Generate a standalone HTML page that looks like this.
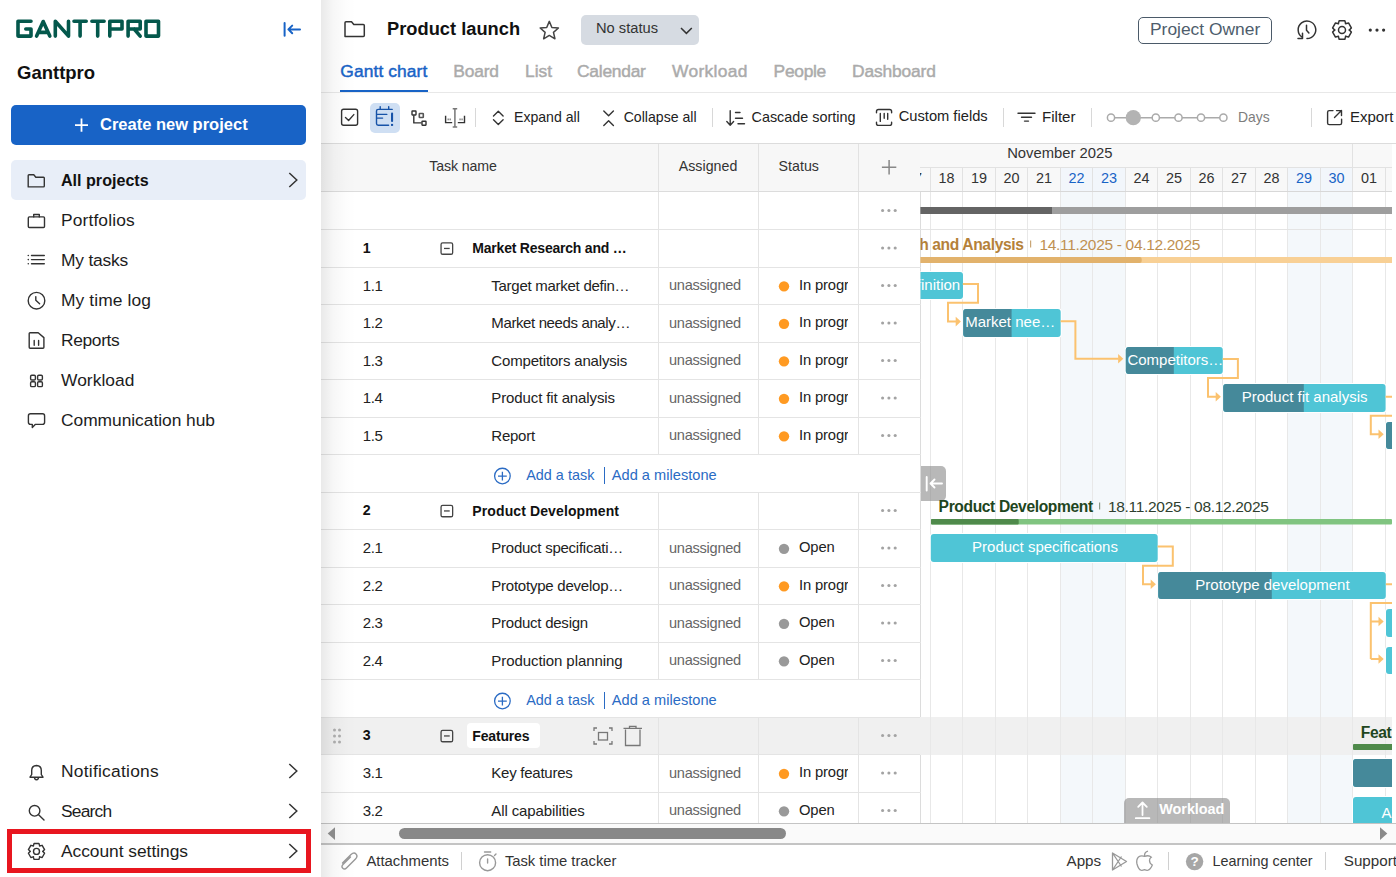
<!DOCTYPE html>
<html><head><meta charset="utf-8"><title>Ganttpro</title>
<style>
html,body{margin:0;padding:0;}
body{width:1396px;height:877px;position:relative;overflow:hidden;background:#fff;font-family:"Liberation Sans",sans-serif;}
.r{position:absolute;}
.t{position:absolute;line-height:1;white-space:nowrap;}
svg.ov{position:absolute;left:0;top:0;z-index:4;}
</style></head><body>
<div class="r" style="left:0.00px;top:0.00px;width:321.00px;height:877.00px;background:#fff;"></div>
<div class="t " style="left:17.00px;top:63.84px;font-size:18.5px;color:#111;font-weight:bold;">Ganttpro</div>
<div class="r" style="left:11.00px;top:105.00px;width:295.00px;height:40.00px;background:#1863c6;border-radius:5px;"></div>
<div class="t " style="left:100.00px;top:115.83px;font-size:16.5px;color:#fff;font-weight:bold;">Create new project</div>
<div class="r" style="left:11.00px;top:160.00px;width:295.00px;height:40.00px;background:#e8eef8;border-radius:5px;"></div>
<div class="t " style="left:61.00px;top:172.27px;font-size:16.1px;color:#111;font-weight:bold;">All projects</div>
<div class="t " style="left:61.00px;top:211.97px;font-size:17.4px;color:#1d1d1d;letter-spacing:0.127px;">Portfolios</div>
<div class="t " style="left:61.00px;top:251.97px;font-size:17.4px;color:#1d1d1d;letter-spacing:-0.205px;">My tasks</div>
<div class="t " style="left:61.00px;top:291.97px;font-size:17.4px;color:#1d1d1d;letter-spacing:0.096px;">My time log</div>
<div class="t " style="left:61.00px;top:331.97px;font-size:17.4px;color:#1d1d1d;letter-spacing:-0.360px;">Reports</div>
<div class="t " style="left:61.00px;top:371.97px;font-size:17.4px;color:#1d1d1d;letter-spacing:0.041px;">Workload</div>
<div class="t " style="left:61.00px;top:411.97px;font-size:17.4px;color:#1d1d1d;letter-spacing:-0.043px;">Communication hub</div>
<div class="t " style="left:61.00px;top:763.07px;font-size:17.4px;color:#1d1d1d;letter-spacing:0.248px;">Notifications</div>
<div class="t " style="left:61.00px;top:803.07px;font-size:17.4px;color:#1d1d1d;letter-spacing:-0.805px;">Search</div>
<div class="t " style="left:61.00px;top:843.07px;font-size:17.4px;color:#1d1d1d;letter-spacing:-0.042px;">Account settings</div>
<div class="r" style="left:7px;top:829px;width:304px;height:44px;box-sizing:border-box;border:5px solid #e8161f;z-index:5"></div>
<div class="t " style="left:387.00px;top:20.31px;font-size:18.3px;color:#111;font-weight:bold;">Product launch</div>
<div class="r" style="left:581.00px;top:15.30px;width:118.00px;height:29.40px;background:#d6dbe2;border-radius:5px;"></div>
<div class="t " style="left:596.00px;top:21.15px;font-size:14.7px;color:#333;">No status</div>
<div class="r" style="left:1138px;top:17px;width:134px;height:27px;box-sizing:border-box;border:1px solid #4b5a69;border-radius:5px;"></div>
<div class="t " style="left:1150.00px;top:20.87px;font-size:17.4px;color:#4e5d6c;">Project Owner</div>
<div class="t " style="left:340.30px;top:63.27px;font-size:17.4px;color:#1863c6;letter-spacing:0.094px;-webkit-text-stroke:0.45px currentColor;">Gantt chart</div>
<div class="t " style="left:453.30px;top:63.27px;font-size:17.4px;color:#ababab;letter-spacing:-0.186px;-webkit-text-stroke:0.45px currentColor;">Board</div>
<div class="t " style="left:525.00px;top:63.27px;font-size:17.4px;color:#ababab;letter-spacing:-0.019px;-webkit-text-stroke:0.45px currentColor;">List</div>
<div class="t " style="left:577.00px;top:63.27px;font-size:17.4px;color:#ababab;letter-spacing:-0.238px;-webkit-text-stroke:0.45px currentColor;">Calendar</div>
<div class="t " style="left:672.00px;top:63.27px;font-size:17.4px;color:#ababab;letter-spacing:0.328px;-webkit-text-stroke:0.45px currentColor;">Workload</div>
<div class="t " style="left:773.60px;top:63.27px;font-size:17.4px;color:#ababab;letter-spacing:-0.296px;-webkit-text-stroke:0.45px currentColor;">People</div>
<div class="t " style="left:852.00px;top:63.27px;font-size:17.4px;color:#ababab;letter-spacing:-0.146px;-webkit-text-stroke:0.45px currentColor;">Dashboard</div>
<div class="r" style="left:321.00px;top:92.00px;width:1075.00px;height:1.00px;background:#e8e8e8;"></div>
<div class="r" style="left:340.00px;top:90.00px;width:88.00px;height:2.20px;background:#1863c6;"></div>
<div class="r" style="left:321.00px;top:143.00px;width:1075.00px;height:1.00px;background:#dcdcdc;"></div>
<div class="r" style="left:370.00px;top:103.00px;width:30.00px;height:29.50px;background:#cfdff3;border-radius:5px;"></div>
<div class="r" style="left:475.30px;top:108.00px;width:1.00px;height:19.00px;background:#d8d8d8;"></div>
<div class="t " style="left:514.00px;top:109.76px;font-size:14.1px;color:#222;">Expand all</div>
<div class="t " style="left:623.70px;top:109.76px;font-size:14.1px;color:#222;">Collapse all</div>
<div class="r" style="left:712.40px;top:108.00px;width:1.00px;height:19.00px;background:#d8d8d8;"></div>
<div class="t " style="left:751.50px;top:109.51px;font-size:14.4px;color:#222;">Cascade sorting</div>
<div class="t " style="left:898.70px;top:109.25px;font-size:14.7px;color:#222;">Custom fields</div>
<div class="r" style="left:1003.20px;top:108.00px;width:1.00px;height:19.00px;background:#d8d8d8;"></div>
<div class="t " style="left:1042.00px;top:108.91px;font-size:15.1px;color:#222;">Filter</div>
<div class="r" style="left:1091.40px;top:108.00px;width:1.00px;height:19.00px;background:#d8d8d8;"></div>
<div class="t " style="left:1238.00px;top:110.63px;font-size:13.9px;color:#7d7d7d;">Days</div>
<div class="r" style="left:1311.20px;top:108.00px;width:1.00px;height:19.00px;background:#d8d8d8;"></div>
<div class="t " style="left:1350.00px;top:109.00px;font-size:15px;color:#222;">Export</div>
<div class="r" style="left:321.00px;top:144.00px;width:599.50px;height:47.00px;background:#f7f7f7;"></div>
<div class="r" style="left:321.00px;top:191.20px;width:599.50px;height:1.00px;background:#dcdcdc;"></div>
<div class="r" style="left:658.00px;top:144.00px;width:1.00px;height:47.00px;background:#e2e2e2;"></div>
<div class="r" style="left:758.00px;top:144.00px;width:1.00px;height:47.00px;background:#e2e2e2;"></div>
<div class="r" style="left:858.00px;top:144.00px;width:1.00px;height:47.00px;background:#e2e2e2;"></div>
<div class="r" style="left:920.00px;top:143.00px;width:1.00px;height:680.00px;background:#dcdcdc;"></div>
<div class="t " style="left:429.20px;top:159.18px;font-size:14.2px;color:#333;letter-spacing:-0.107px;">Task name</div>
<div class="t " style="left:678.70px;top:159.18px;font-size:14.2px;color:#333;letter-spacing:0.036px;">Assigned</div>
<div class="t " style="left:778.60px;top:159.18px;font-size:14.2px;color:#333;letter-spacing:0.024px;">Status</div>
<div class="r" style="left:658.00px;top:192.20px;width:1.00px;height:37.50px;background:#e4e4e4;"></div>
<div class="r" style="left:758.00px;top:192.20px;width:1.00px;height:37.50px;background:#e4e4e4;"></div>
<div class="r" style="left:858.00px;top:192.20px;width:1.00px;height:37.50px;background:#e4e4e4;"></div>
<div class="r" style="left:321.00px;top:229.20px;width:599.50px;height:1.00px;background:#e4e4e4;"></div>
<div class="r" style="left:658.00px;top:229.70px;width:1.00px;height:37.50px;background:#e4e4e4;"></div>
<div class="r" style="left:758.00px;top:229.70px;width:1.00px;height:37.50px;background:#e4e4e4;"></div>
<div class="r" style="left:858.00px;top:229.70px;width:1.00px;height:37.50px;background:#e4e4e4;"></div>
<div class="r" style="left:321.00px;top:266.70px;width:599.50px;height:1.00px;background:#e4e4e4;"></div>
<div class="t " style="left:362.80px;top:240.88px;font-size:14.2px;color:#111;font-weight:bold;">1</div>
<div class="t " style="left:472.30px;top:241.05px;font-size:14.0px;color:#111;font-weight:bold;letter-spacing:-0.211px;">Market Research and …</div>
<div class="r" style="left:658.00px;top:267.20px;width:1.00px;height:37.50px;background:#e4e4e4;"></div>
<div class="r" style="left:758.00px;top:267.20px;width:1.00px;height:37.50px;background:#e4e4e4;"></div>
<div class="r" style="left:858.00px;top:267.20px;width:1.00px;height:37.50px;background:#e4e4e4;"></div>
<div class="r" style="left:321.00px;top:304.20px;width:599.50px;height:1.00px;background:#e4e4e4;"></div>
<div class="t " style="left:362.80px;top:277.70px;font-size:15.0px;color:#222;letter-spacing:-0.417px;">1.1</div>
<div class="t " style="left:491.30px;top:277.70px;font-size:15.0px;color:#222;letter-spacing:-0.269px;">Target market defin…</div>
<div class="t " style="left:669.00px;top:278.04px;font-size:14.6px;color:#666;letter-spacing:-0.268px;">unassigned</div>
<div class="r" style="left:799px;top:267.2px;width:49px;height:37.5px;overflow:hidden;">
<div class="t " style="left:0.00px;top:10.67px;font-size:14.8px;color:#222;letter-spacing:-0.15px;">In progress</div>
</div>
<div class="r" style="left:658.00px;top:304.70px;width:1.00px;height:37.50px;background:#e4e4e4;"></div>
<div class="r" style="left:758.00px;top:304.70px;width:1.00px;height:37.50px;background:#e4e4e4;"></div>
<div class="r" style="left:858.00px;top:304.70px;width:1.00px;height:37.50px;background:#e4e4e4;"></div>
<div class="r" style="left:321.00px;top:341.70px;width:599.50px;height:1.00px;background:#e4e4e4;"></div>
<div class="t " style="left:362.80px;top:315.20px;font-size:15.0px;color:#222;letter-spacing:-0.417px;">1.2</div>
<div class="t " style="left:491.30px;top:315.20px;font-size:15.0px;color:#222;letter-spacing:-0.379px;">Market needs analy…</div>
<div class="t " style="left:669.00px;top:315.54px;font-size:14.6px;color:#666;letter-spacing:-0.268px;">unassigned</div>
<div class="r" style="left:799px;top:304.7px;width:49px;height:37.5px;overflow:hidden;">
<div class="t " style="left:0.00px;top:10.67px;font-size:14.8px;color:#222;letter-spacing:-0.15px;">In progress</div>
</div>
<div class="r" style="left:658.00px;top:342.20px;width:1.00px;height:37.50px;background:#e4e4e4;"></div>
<div class="r" style="left:758.00px;top:342.20px;width:1.00px;height:37.50px;background:#e4e4e4;"></div>
<div class="r" style="left:858.00px;top:342.20px;width:1.00px;height:37.50px;background:#e4e4e4;"></div>
<div class="r" style="left:321.00px;top:379.20px;width:599.50px;height:1.00px;background:#e4e4e4;"></div>
<div class="t " style="left:362.80px;top:352.70px;font-size:15.0px;color:#222;letter-spacing:-0.417px;">1.3</div>
<div class="t " style="left:491.30px;top:352.70px;font-size:15.0px;color:#222;letter-spacing:-0.171px;">Competitors analysis</div>
<div class="t " style="left:669.00px;top:353.04px;font-size:14.6px;color:#666;letter-spacing:-0.268px;">unassigned</div>
<div class="r" style="left:799px;top:342.2px;width:49px;height:37.5px;overflow:hidden;">
<div class="t " style="left:0.00px;top:10.67px;font-size:14.8px;color:#222;letter-spacing:-0.15px;">In progress</div>
</div>
<div class="r" style="left:658.00px;top:379.70px;width:1.00px;height:37.50px;background:#e4e4e4;"></div>
<div class="r" style="left:758.00px;top:379.70px;width:1.00px;height:37.50px;background:#e4e4e4;"></div>
<div class="r" style="left:858.00px;top:379.70px;width:1.00px;height:37.50px;background:#e4e4e4;"></div>
<div class="r" style="left:321.00px;top:416.70px;width:599.50px;height:1.00px;background:#e4e4e4;"></div>
<div class="t " style="left:362.80px;top:390.20px;font-size:15.0px;color:#222;letter-spacing:-0.417px;">1.4</div>
<div class="t " style="left:491.30px;top:390.20px;font-size:15.0px;color:#222;letter-spacing:-0.114px;">Product fit analysis</div>
<div class="t " style="left:669.00px;top:390.54px;font-size:14.6px;color:#666;letter-spacing:-0.268px;">unassigned</div>
<div class="r" style="left:799px;top:379.7px;width:49px;height:37.5px;overflow:hidden;">
<div class="t " style="left:0.00px;top:10.67px;font-size:14.8px;color:#222;letter-spacing:-0.15px;">In progress</div>
</div>
<div class="r" style="left:658.00px;top:417.20px;width:1.00px;height:37.50px;background:#e4e4e4;"></div>
<div class="r" style="left:758.00px;top:417.20px;width:1.00px;height:37.50px;background:#e4e4e4;"></div>
<div class="r" style="left:858.00px;top:417.20px;width:1.00px;height:37.50px;background:#e4e4e4;"></div>
<div class="r" style="left:321.00px;top:454.20px;width:599.50px;height:1.00px;background:#e4e4e4;"></div>
<div class="t " style="left:362.80px;top:427.70px;font-size:15.0px;color:#222;letter-spacing:-0.417px;">1.5</div>
<div class="t " style="left:491.30px;top:427.70px;font-size:15.0px;color:#222;letter-spacing:-0.236px;">Report</div>
<div class="t " style="left:669.00px;top:428.04px;font-size:14.6px;color:#666;letter-spacing:-0.268px;">unassigned</div>
<div class="r" style="left:799px;top:417.2px;width:49px;height:37.5px;overflow:hidden;">
<div class="t " style="left:0.00px;top:10.67px;font-size:14.8px;color:#222;letter-spacing:-0.15px;">In progress</div>
</div>
<div class="r" style="left:321.00px;top:491.70px;width:599.50px;height:1.00px;background:#e4e4e4;"></div>
<div class="t " style="left:526.20px;top:467.91px;font-size:14.4px;color:#2a6bc4;letter-spacing:0.016px;">Add a task</div>
<div class="r" style="left:604.00px;top:466.70px;width:1.30px;height:17.20px;background:#2a6bc4;"></div>
<div class="t " style="left:611.80px;top:467.74px;font-size:14.6px;color:#2a6bc4;letter-spacing:0.014px;">Add a milestone</div>
<div class="r" style="left:658.00px;top:492.20px;width:1.00px;height:37.50px;background:#e4e4e4;"></div>
<div class="r" style="left:758.00px;top:492.20px;width:1.00px;height:37.50px;background:#e4e4e4;"></div>
<div class="r" style="left:858.00px;top:492.20px;width:1.00px;height:37.50px;background:#e4e4e4;"></div>
<div class="r" style="left:321.00px;top:529.20px;width:599.50px;height:1.00px;background:#e4e4e4;"></div>
<div class="t " style="left:362.80px;top:503.38px;font-size:14.2px;color:#111;font-weight:bold;">2</div>
<div class="t " style="left:472.30px;top:503.55px;font-size:14.0px;color:#111;font-weight:bold;letter-spacing:0.112px;">Product Development</div>
<div class="r" style="left:658.00px;top:529.70px;width:1.00px;height:37.50px;background:#e4e4e4;"></div>
<div class="r" style="left:758.00px;top:529.70px;width:1.00px;height:37.50px;background:#e4e4e4;"></div>
<div class="r" style="left:858.00px;top:529.70px;width:1.00px;height:37.50px;background:#e4e4e4;"></div>
<div class="r" style="left:321.00px;top:566.70px;width:599.50px;height:1.00px;background:#e4e4e4;"></div>
<div class="t " style="left:362.80px;top:540.20px;font-size:15.0px;color:#222;letter-spacing:-0.417px;">2.1</div>
<div class="t " style="left:491.30px;top:540.20px;font-size:15.0px;color:#222;letter-spacing:-0.251px;">Product specificati…</div>
<div class="t " style="left:669.00px;top:540.54px;font-size:14.6px;color:#666;letter-spacing:-0.268px;">unassigned</div>
<div class="t " style="left:799.00px;top:540.37px;font-size:14.8px;color:#222;letter-spacing:-0.176px;">Open</div>
<div class="r" style="left:658.00px;top:567.20px;width:1.00px;height:37.50px;background:#e4e4e4;"></div>
<div class="r" style="left:758.00px;top:567.20px;width:1.00px;height:37.50px;background:#e4e4e4;"></div>
<div class="r" style="left:858.00px;top:567.20px;width:1.00px;height:37.50px;background:#e4e4e4;"></div>
<div class="r" style="left:321.00px;top:604.20px;width:599.50px;height:1.00px;background:#e4e4e4;"></div>
<div class="t " style="left:362.80px;top:577.70px;font-size:15.0px;color:#222;letter-spacing:-0.417px;">2.2</div>
<div class="t " style="left:491.30px;top:577.70px;font-size:15.0px;color:#222;letter-spacing:-0.234px;">Prototype develop…</div>
<div class="t " style="left:669.00px;top:578.04px;font-size:14.6px;color:#666;letter-spacing:-0.268px;">unassigned</div>
<div class="r" style="left:799px;top:567.2px;width:49px;height:37.5px;overflow:hidden;">
<div class="t " style="left:0.00px;top:10.67px;font-size:14.8px;color:#222;letter-spacing:-0.15px;">In progress</div>
</div>
<div class="r" style="left:658.00px;top:604.70px;width:1.00px;height:37.50px;background:#e4e4e4;"></div>
<div class="r" style="left:758.00px;top:604.70px;width:1.00px;height:37.50px;background:#e4e4e4;"></div>
<div class="r" style="left:858.00px;top:604.70px;width:1.00px;height:37.50px;background:#e4e4e4;"></div>
<div class="r" style="left:321.00px;top:641.70px;width:599.50px;height:1.00px;background:#e4e4e4;"></div>
<div class="t " style="left:362.80px;top:615.20px;font-size:15.0px;color:#222;letter-spacing:-0.417px;">2.3</div>
<div class="t " style="left:491.30px;top:615.20px;font-size:15.0px;color:#222;letter-spacing:-0.247px;">Product design</div>
<div class="t " style="left:669.00px;top:615.54px;font-size:14.6px;color:#666;letter-spacing:-0.268px;">unassigned</div>
<div class="t " style="left:799.00px;top:615.37px;font-size:14.8px;color:#222;letter-spacing:-0.176px;">Open</div>
<div class="r" style="left:658.00px;top:642.20px;width:1.00px;height:37.50px;background:#e4e4e4;"></div>
<div class="r" style="left:758.00px;top:642.20px;width:1.00px;height:37.50px;background:#e4e4e4;"></div>
<div class="r" style="left:858.00px;top:642.20px;width:1.00px;height:37.50px;background:#e4e4e4;"></div>
<div class="r" style="left:321.00px;top:679.20px;width:599.50px;height:1.00px;background:#e4e4e4;"></div>
<div class="t " style="left:362.80px;top:652.70px;font-size:15.0px;color:#222;letter-spacing:-0.417px;">2.4</div>
<div class="t " style="left:491.30px;top:652.70px;font-size:15.0px;color:#222;letter-spacing:-0.073px;">Production planning</div>
<div class="t " style="left:669.00px;top:653.04px;font-size:14.6px;color:#666;letter-spacing:-0.268px;">unassigned</div>
<div class="t " style="left:799.00px;top:652.87px;font-size:14.8px;color:#222;letter-spacing:-0.176px;">Open</div>
<div class="r" style="left:321.00px;top:716.70px;width:599.50px;height:1.00px;background:#e4e4e4;"></div>
<div class="t " style="left:526.20px;top:692.91px;font-size:14.4px;color:#2a6bc4;letter-spacing:0.016px;">Add a task</div>
<div class="r" style="left:604.00px;top:691.70px;width:1.30px;height:17.20px;background:#2a6bc4;"></div>
<div class="t " style="left:611.80px;top:692.74px;font-size:14.6px;color:#2a6bc4;letter-spacing:0.014px;">Add a milestone</div>
<div class="r" style="left:321.00px;top:717.80px;width:1071.00px;height:36.90px;background:#f0f0f0;"></div>
<div class="r" style="left:658.00px;top:717.20px;width:1.00px;height:37.50px;background:#e4e4e4;"></div>
<div class="r" style="left:758.00px;top:717.20px;width:1.00px;height:37.50px;background:#e4e4e4;"></div>
<div class="r" style="left:858.00px;top:717.20px;width:1.00px;height:37.50px;background:#e4e4e4;"></div>
<div class="r" style="left:321.00px;top:754.20px;width:599.50px;height:1.00px;background:#e4e4e4;"></div>
<div class="t " style="left:362.80px;top:728.38px;font-size:14.2px;color:#111;font-weight:bold;">3</div>
<div class="r" style="left:467.00px;top:723.40px;width:72.70px;height:24.50px;background:#fff;border-radius:4px;"></div>
<div class="t " style="left:472.30px;top:728.55px;font-size:14.0px;color:#111;font-weight:bold;letter-spacing:-0.169px;">Features</div>
<div class="r" style="left:658.00px;top:754.70px;width:1.00px;height:37.50px;background:#e4e4e4;"></div>
<div class="r" style="left:758.00px;top:754.70px;width:1.00px;height:37.50px;background:#e4e4e4;"></div>
<div class="r" style="left:858.00px;top:754.70px;width:1.00px;height:37.50px;background:#e4e4e4;"></div>
<div class="r" style="left:321.00px;top:791.70px;width:599.50px;height:1.00px;background:#e4e4e4;"></div>
<div class="t " style="left:362.80px;top:765.20px;font-size:15.0px;color:#222;letter-spacing:-0.417px;">3.1</div>
<div class="t " style="left:491.30px;top:765.20px;font-size:15.0px;color:#222;letter-spacing:-0.251px;">Key features</div>
<div class="t " style="left:669.00px;top:765.54px;font-size:14.6px;color:#666;letter-spacing:-0.268px;">unassigned</div>
<div class="r" style="left:799px;top:754.7px;width:49px;height:37.5px;overflow:hidden;">
<div class="t " style="left:0.00px;top:10.67px;font-size:14.8px;color:#222;letter-spacing:-0.15px;">In progress</div>
</div>
<div class="r" style="left:658.00px;top:792.20px;width:1.00px;height:37.50px;background:#e4e4e4;"></div>
<div class="r" style="left:758.00px;top:792.20px;width:1.00px;height:37.50px;background:#e4e4e4;"></div>
<div class="r" style="left:858.00px;top:792.20px;width:1.00px;height:37.50px;background:#e4e4e4;"></div>
<div class="t " style="left:362.80px;top:802.70px;font-size:15.0px;color:#222;letter-spacing:-0.417px;">3.2</div>
<div class="t " style="left:491.30px;top:802.70px;font-size:15.0px;color:#222;letter-spacing:-0.103px;">All capabilities</div>
<div class="t " style="left:669.00px;top:803.04px;font-size:14.6px;color:#666;letter-spacing:-0.268px;">unassigned</div>
<div class="t " style="left:799.00px;top:802.87px;font-size:14.8px;color:#222;letter-spacing:-0.176px;">Open</div>
<div class="r" style="left:920.00px;top:144.00px;width:472.00px;height:47.00px;background:#f8f8f8;"></div>
<div class="r" style="left:920.00px;top:167.00px;width:472.00px;height:1.00px;background:#e2e2e2;"></div>
<div class="r" style="left:920.00px;top:191.00px;width:472.00px;height:1.00px;background:#d8d8d8;"></div>
<div class="r" style="left:1352.00px;top:144.00px;width:1.00px;height:23.00px;background:#e2e2e2;"></div>
<div class="r" style="left:920px;top:143px;width:472px;height:680px;overflow:hidden;">
<div class="r" style="left:140.00px;top:25.00px;width:33.00px;height:23.00px;background:#f2f6fb;"></div>
<div class="r" style="left:140.00px;top:49.00px;width:33.00px;height:640.00px;background:#f4f8fb;"></div>
<div class="r" style="left:172.00px;top:25.00px;width:34.00px;height:23.00px;background:#f2f6fb;"></div>
<div class="r" style="left:172.00px;top:49.00px;width:34.00px;height:640.00px;background:#f4f8fb;"></div>
<div class="r" style="left:367.00px;top:25.00px;width:34.00px;height:23.00px;background:#f2f6fb;"></div>
<div class="r" style="left:367.00px;top:49.00px;width:34.00px;height:640.00px;background:#f4f8fb;"></div>
<div class="r" style="left:400.00px;top:25.00px;width:33.00px;height:23.00px;background:#f2f6fb;"></div>
<div class="r" style="left:400.00px;top:49.00px;width:33.00px;height:640.00px;background:#f4f8fb;"></div>
<div class="r" style="left:0.00px;top:574.20px;width:472.00px;height:37.50px;background:#f0f0f0;"></div>
<div class="r" style="left:10.00px;top:25.00px;width:1.00px;height:23.00px;background:#e2e2e2;"></div>
<div class="r" style="left:10.00px;top:49.00px;width:1.00px;height:640.00px;background:#e8e8e8;"></div>
<div class="t" style="left:-22.50px;width:33px;text-align:center;top:28.11px;font-size:14.4px;color:#333;">17</div>
<div class="r" style="left:42.00px;top:25.00px;width:1.00px;height:23.00px;background:#e2e2e2;"></div>
<div class="r" style="left:42.00px;top:49.00px;width:1.00px;height:640.00px;background:#e8e8e8;"></div>
<div class="t" style="left:10.50px;width:32px;text-align:center;top:28.11px;font-size:14.4px;color:#333;">18</div>
<div class="r" style="left:75.00px;top:25.00px;width:1.00px;height:23.00px;background:#e2e2e2;"></div>
<div class="r" style="left:75.00px;top:49.00px;width:1.00px;height:640.00px;background:#e8e8e8;"></div>
<div class="t" style="left:42.50px;width:33px;text-align:center;top:28.11px;font-size:14.4px;color:#333;">19</div>
<div class="r" style="left:107.00px;top:25.00px;width:1.00px;height:23.00px;background:#e2e2e2;"></div>
<div class="r" style="left:107.00px;top:49.00px;width:1.00px;height:640.00px;background:#e8e8e8;"></div>
<div class="t" style="left:75.50px;width:32px;text-align:center;top:28.11px;font-size:14.4px;color:#333;">20</div>
<div class="r" style="left:140.00px;top:25.00px;width:1.00px;height:23.00px;background:#e2e2e2;"></div>
<div class="r" style="left:140.00px;top:49.00px;width:1.00px;height:640.00px;background:#e8e8e8;"></div>
<div class="t" style="left:107.50px;width:33px;text-align:center;top:28.11px;font-size:14.4px;color:#333;">21</div>
<div class="r" style="left:172.00px;top:25.00px;width:1.00px;height:23.00px;background:#e2e2e2;"></div>
<div class="r" style="left:172.00px;top:49.00px;width:1.00px;height:640.00px;background:#e8e8e8;"></div>
<div class="t" style="left:140.50px;width:32px;text-align:center;top:28.11px;font-size:14.4px;color:#1863c6;">22</div>
<div class="r" style="left:205.00px;top:25.00px;width:1.00px;height:23.00px;background:#e2e2e2;"></div>
<div class="r" style="left:205.00px;top:49.00px;width:1.00px;height:640.00px;background:#e8e8e8;"></div>
<div class="t" style="left:172.50px;width:33px;text-align:center;top:28.11px;font-size:14.4px;color:#1863c6;">23</div>
<div class="r" style="left:237.00px;top:25.00px;width:1.00px;height:23.00px;background:#e2e2e2;"></div>
<div class="r" style="left:237.00px;top:49.00px;width:1.00px;height:640.00px;background:#e8e8e8;"></div>
<div class="t" style="left:205.50px;width:32px;text-align:center;top:28.11px;font-size:14.4px;color:#333;">24</div>
<div class="r" style="left:270.00px;top:25.00px;width:1.00px;height:23.00px;background:#e2e2e2;"></div>
<div class="r" style="left:270.00px;top:49.00px;width:1.00px;height:640.00px;background:#e8e8e8;"></div>
<div class="t" style="left:237.50px;width:33px;text-align:center;top:28.11px;font-size:14.4px;color:#333;">25</div>
<div class="r" style="left:302.00px;top:25.00px;width:1.00px;height:23.00px;background:#e2e2e2;"></div>
<div class="r" style="left:302.00px;top:49.00px;width:1.00px;height:640.00px;background:#e8e8e8;"></div>
<div class="t" style="left:270.50px;width:32px;text-align:center;top:28.11px;font-size:14.4px;color:#333;">26</div>
<div class="r" style="left:335.00px;top:25.00px;width:1.00px;height:23.00px;background:#e2e2e2;"></div>
<div class="r" style="left:335.00px;top:49.00px;width:1.00px;height:640.00px;background:#e8e8e8;"></div>
<div class="t" style="left:302.50px;width:33px;text-align:center;top:28.11px;font-size:14.4px;color:#333;">27</div>
<div class="r" style="left:367.00px;top:25.00px;width:1.00px;height:23.00px;background:#e2e2e2;"></div>
<div class="r" style="left:367.00px;top:49.00px;width:1.00px;height:640.00px;background:#e8e8e8;"></div>
<div class="t" style="left:335.50px;width:32px;text-align:center;top:28.11px;font-size:14.4px;color:#333;">28</div>
<div class="r" style="left:400.00px;top:25.00px;width:1.00px;height:23.00px;background:#e2e2e2;"></div>
<div class="r" style="left:400.00px;top:49.00px;width:1.00px;height:640.00px;background:#e8e8e8;"></div>
<div class="t" style="left:367.50px;width:33px;text-align:center;top:28.11px;font-size:14.4px;color:#1863c6;">29</div>
<div class="r" style="left:432.00px;top:25.00px;width:1.00px;height:23.00px;background:#e2e2e2;"></div>
<div class="r" style="left:432.00px;top:49.00px;width:1.00px;height:640.00px;background:#e8e8e8;"></div>
<div class="t" style="left:400.50px;width:32px;text-align:center;top:28.11px;font-size:14.4px;color:#1863c6;">30</div>
<div class="r" style="left:465.00px;top:25.00px;width:1.00px;height:23.00px;background:#e2e2e2;"></div>
<div class="r" style="left:465.00px;top:49.00px;width:1.00px;height:640.00px;background:#e8e8e8;"></div>
<div class="t" style="left:432.50px;width:33px;text-align:center;top:28.11px;font-size:14.4px;color:#333;">01</div>
<div class="r" style="left:497.00px;top:25.00px;width:1.00px;height:23.00px;background:#e2e2e2;"></div>
<div class="r" style="left:497.00px;top:49.00px;width:1.00px;height:640.00px;background:#e8e8e8;"></div>
<div class="t" style="left:465.50px;width:32px;text-align:center;top:28.11px;font-size:14.4px;color:#333;">02</div>
<div class="t" style="left:87.20px;top:3.37px;font-size:14.8px;color:#333;">November 2025</div>
<div class="r" style="left:0.00px;top:86.00px;width:472.00px;height:1.00px;background:#e4e4e4;"></div>
</div>
<div class="r" style="left:921.00px;top:466.00px;width:24.70px;height:34.70px;background:rgba(140,140,140,0.62);border-radius:0 5px 5px 0;"></div>
<div class="r" style="left:1124.40px;top:798.00px;width:105.40px;height:25.50px;background:rgba(140,140,140,0.62);border-radius:5px 5px 0 0;"></div>
<div class="t " style="left:1159.30px;top:801.61px;font-size:14.4px;color:#fff;font-weight:bold;letter-spacing:-0.042px;">Workload</div>
<div class="r" style="left:1392.00px;top:143.50px;width:4.00px;height:680.00px;background:#fff;"></div>
<div class="r" style="left:321.00px;top:823.00px;width:1075.00px;height:21.00px;background:#fafafa;"></div>
<div class="r" style="left:321.00px;top:822.60px;width:1075.00px;height:1.00px;background:#c4c4c4;"></div>
<div class="r" style="left:321.00px;top:843.20px;width:1075.00px;height:2.00px;background:#c4c4c4;"></div>
<div class="r" style="left:398.60px;top:828.00px;width:387.10px;height:11.00px;background:#888;border-radius:6px;"></div>
<div class="t " style="left:366.40px;top:853.68px;font-size:14.9px;color:#333;letter-spacing:-0.019px;">Attachments</div>
<div class="r" style="left:461.00px;top:852.00px;width:1.00px;height:18.40px;background:#d0d0d0;"></div>
<div class="t " style="left:504.90px;top:853.77px;font-size:14.8px;color:#333;letter-spacing:-0.014px;">Task time tracker</div>
<div class="t " style="left:1066.50px;top:853.43px;font-size:15.2px;color:#333;">Apps</div>
<div class="r" style="left:1168.00px;top:852.00px;width:1.00px;height:18.40px;background:#d0d0d0;"></div>
<div class="t " style="left:1212.40px;top:854.11px;font-size:14.4px;color:#333;letter-spacing:0.016px;">Learning center</div>
<div class="r" style="left:1325.20px;top:852.00px;width:1.00px;height:18.40px;background:#d0d0d0;"></div>
<div class="t " style="left:1343.80px;top:853.43px;font-size:15.2px;color:#333;">Support</div>
<div class="r" style="left:321px;top:0;width:36px;height:877px;background:linear-gradient(to right, rgba(0,0,0,0.085), rgba(0,0,0,0.03) 35%, rgba(0,0,0,0.008) 70%, rgba(0,0,0,0));z-index:3"></div>
<svg class="ov" width="1396" height="877" viewBox="0 0 1396 877" style="font-family:'Liberation Sans',sans-serif">
<g fill="none" stroke="#04584c" stroke-width="3.6" stroke-linejoin="round" stroke-linecap="round"><path d="M31,21.3 H18 V36.1 H31 V29 H25.8"/><path d="M36.6,36.1 L43.2,21.5 L49.8,36.1 M39.2,32.4 H47.4"/><path d="M55.3,36.1 V21.3 L68.5,36.1 V21.3"/><path d="M74,21.3 H86.2 M80.1,21.3 V36.1"/><path d="M91.9,21.3 H104.1 M97.7,21.3 V36.1"/><path d="M109.8,36.1 V21.3 H122 V29 H109.8"/><path d="M128.1,36.1 V21.3 H140.2 V29 H128.1 M134.2,29 L140.2,36.1"/><path d="M146,21.3 H158.5 V36.1 H146 Z"/></g>
<g fill="none" stroke="#1863c6" stroke-width="2" stroke-linecap="round" stroke-linejoin="round"><path d="M284.6,23 V35.8 M288.5,29.4 H300 M292.2,25.6 L288.4,29.4 L292.2,33.2"/></g>
<path d="M81.5,118.6 V131.8 M75,125.2 H88" stroke="#fff" stroke-width="1.8" fill="none"/>
<path d="M289.3,173 L296.8,180 L289.3,187" fill="none" stroke="#333" stroke-width="1.5"/>
<g fill="none" stroke="#333" stroke-width="1.4" stroke-linejoin="round" stroke-linecap="round"><path d="M28.2,186.9 V175.6 Q28.2,174.8 29,174.8 H33.8 L35.8,177.2 H43.5 Q44.3,177.2 44.3,178 V186.1 Q44.3,186.9 43.5,186.9 Z"/></g>
<g fill="none" stroke="#333" stroke-width="1.4" stroke-linejoin="round" stroke-linecap="round"><rect x="28.3" y="216.9" width="16.2" height="10.6" rx="1"/><path d="M33.7,216.9 V214.5 H39.3 V216.9"/></g>
<g fill="none" stroke="#333" stroke-width="1.4" stroke-linejoin="round" stroke-linecap="round"><path d="M31.5,255.5 H44.3 M31.5,259.6 H44.3 M31.5,263.8 H44.3"/></g>
<g fill="#333"><circle cx="28.3" cy="255.5" r="0.8"/><circle cx="28.3" cy="259.6" r="0.8"/><circle cx="28.3" cy="263.8" r="0.8"/></g>
<g fill="none" stroke="#333" stroke-width="1.4" stroke-linejoin="round" stroke-linecap="round"><circle cx="36.5" cy="300.7" r="8.3"/><path d="M35.8,296.6 V300.3 L39.6,303.8"/></g>
<g fill="none" stroke="#333" stroke-width="1.4" stroke-linejoin="round" stroke-linecap="round"><path d="M29.2,347.3 V333.6 Q29.2,332.7 30.1,332.7 H38.2 L43.9,337.6 V347.3 Q43.9,348.2 43,348.2 H30.1 Q29.2,348.2 29.2,347.3 Z M34.2,345.2 V340.5 M38.6,345.2 V340.5"/></g>
<g fill="none" stroke="#333" stroke-width="1.4" stroke-linejoin="round" stroke-linecap="round"><rect x="30.6" y="375.2" width="4.8" height="4.8" rx="1.2"/><rect x="37.6" y="375.2" width="4.8" height="4.8" rx="1.2"/><rect x="30.6" y="381.8" width="4.8" height="4.8" rx="1.2"/><rect x="37.6" y="381.8" width="4.8" height="4.8" rx="1.2"/></g>
<g fill="none" stroke="#333" stroke-width="1.4" stroke-linejoin="round" stroke-linecap="round"><path d="M30.5,413.8 H42.5 Q44.6,413.8 44.6,415.9 V422.3 Q44.6,424.4 42.5,424.4 H35.2 L32.3,427.4 V424.4 H30.5 Q28.4,424.4 28.4,422.3 V415.9 Q28.4,413.8 30.5,413.8 Z"/></g>
<path d="M289.3,764 L296.8,771 L289.3,778" fill="none" stroke="#333" stroke-width="1.5"/>
<path d="M289.3,804 L296.8,811 L289.3,818" fill="none" stroke="#333" stroke-width="1.5"/>
<path d="M289.3,844 L296.8,851 L289.3,858" fill="none" stroke="#333" stroke-width="1.5"/>
<g fill="none" stroke="#333" stroke-width="1.4" stroke-linejoin="round" stroke-linecap="round"><path d="M30,777.2 H43 L41.3,774.5 V770.5 Q41.3,765.8 36.5,765.5 Q31.7,765.8 31.7,770.5 V774.5 Z M34.6,778.5 Q36.5,781 38.4,778.5"/></g>
<g fill="none" stroke="#333" stroke-width="1.4" stroke-linejoin="round" stroke-linecap="round"><circle cx="34.6" cy="810.8" r="5.3"/><path d="M38.6,814.8 L44,820"/></g>
<g fill="none" stroke="#333" stroke-width="1.4" stroke-linejoin="round"><path d="M34.05,843.47 L38.95,843.47 L39.74,846.11 L39.46,845.95 L42.14,845.31 L44.59,849.56 L42.70,851.56 L42.70,851.24 L44.59,853.24 L42.14,857.49 L39.46,856.85 L39.74,856.69 L38.95,859.33 L34.05,859.33 L33.26,856.69 L33.54,856.85 L30.86,857.49 L28.41,853.24 L30.30,851.24 L30.30,851.56 L28.41,849.56 L30.86,845.31 L33.54,845.95 L33.26,846.11 Z"/><circle cx="36.5" cy="851.4" r="3.0"/></g>
<g fill="none" stroke="#333" stroke-width="1.5" stroke-linejoin="round" stroke-linecap="round"><path d="M345,36.6 V22.8 Q345,21.8 346,21.8 H351.5 L353.8,24.6 H363.3 Q364.3,24.6 364.3,25.6 V35.6 Q364.3,36.6 363.3,36.6 Z"/></g>
<path d="M549.30,21.40 L551.89,27.44 L558.43,28.03 L553.48,32.36 L554.94,38.77 L549.30,35.40 L543.66,38.77 L545.12,32.36 L540.17,28.03 L546.71,27.44 Z" fill="none" stroke="#444" stroke-width="1.5" stroke-linejoin="round"/>
<path d="M681,28 L686.4,33.4 L691.8,28" fill="none" stroke="#333" stroke-width="1.5"/>
<g fill="none" stroke="#333" stroke-width="1.5" stroke-linejoin="round" stroke-linecap="round"><path d="M1307,38.6 A8.8,8.8 0 1 0 1302.2,37.2"/><path d="M1302.5,33.2 V38.4 H1298"/><path d="M1306.5,25.3 V30.2 L1308.9,33"/></g>
<g fill="none" stroke="#333" stroke-width="1.5" stroke-linejoin="round"><path d="M1339.16,20.83 L1344.84,20.83 L1345.76,23.86 L1345.43,23.67 L1348.52,22.96 L1351.36,27.87 L1349.20,30.19 L1349.20,29.81 L1351.36,32.13 L1348.52,37.04 L1345.43,36.33 L1345.76,36.14 L1344.84,39.17 L1339.16,39.17 L1338.24,36.14 L1338.57,36.33 L1335.48,37.04 L1332.64,32.13 L1334.80,29.81 L1334.80,30.19 L1332.64,27.87 L1335.48,22.96 L1338.57,23.67 L1338.24,23.86 Z"/><circle cx="1342" cy="30" r="3.5"/></g>
<g fill="#333"><circle cx="1370.3" cy="30.1" r="1.6"/><circle cx="1377" cy="30.1" r="1.6"/><circle cx="1383.6" cy="30.1" r="1.6"/></g>
<g fill="none" stroke="#333" stroke-width="1.4" stroke-linejoin="round" stroke-linecap="round"><rect x="341.6" y="109.2" width="16" height="16" rx="2"/><path d="M345.5,117.5 L348.6,120.5 L353.8,114.6"/></g>
<g fill="none" stroke="#1753a8" stroke-width="1.4" stroke-linecap="round" stroke-linejoin="round"><path d="M392.2,109.4 H378.2 Q376.5,109.4 376.5,111.1 V123.6 Q376.5,125.3 378.2,125.3 H388.6 M380.2,106.6 V109 M388.7,106.6 V109 M376.5,114.4 H386.8 M376.5,118.1 H382.6"/></g><rect x="391" y="112.6" width="2.1" height="9.4" rx="1" fill="#1753a8"/><rect x="391" y="123.9" width="2.1" height="2" fill="#1753a8"/>
<g fill="none" stroke="#333" stroke-width="1.4" stroke-linejoin="round"><rect x="412" y="111" width="4" height="4" rx="0.4"/><rect x="422" y="121.2" width="4" height="4" rx="0.4"/><path d="M413.8,115.2 V122.9 H421.6"/></g>
<rect x="419.3" y="113.5" width="4" height="4" rx="0.6" fill="none" stroke="#555" stroke-width="1.6"/>
<g fill="none" stroke="#777" stroke-width="1.5"><path d="M454.9,109 V126.8 M452.7,108.8 H457.2 M452.7,127 H457.2"/></g>
<g fill="none" stroke="#333" stroke-width="1.4"><path d="M445.6,115.8 V122.6 H452.2 M457.8,122.6 H464.5 V115.8"/></g>
<g fill="#666"><rect x="447.6" y="118.5" width="1.1" height="1.8"/><rect x="449.6" y="118.5" width="1.1" height="1.8"/><rect x="459.5" y="118.5" width="1.1" height="1.8"/><rect x="461.5" y="118.5" width="1.1" height="1.8"/></g>
<g fill="none" stroke="#333" stroke-width="1.4" stroke-linejoin="round" stroke-linecap="round"><path d="M493.5,116 L498.3,111.3 L503.1,116 M493.5,119.8 L498.3,124.5 L503.1,119.8"/></g>
<g fill="none" stroke="#333" stroke-width="1.4" stroke-linejoin="round" stroke-linecap="round"><path d="M603.8,111 L608.6,115.8 L613.4,111 M603.8,125.6 L608.6,120.8 L613.4,125.6"/></g>
<g fill="none" stroke="#333" stroke-width="1.4" stroke-linejoin="round" stroke-linecap="round"><path d="M730.2,110.8 V125.2 M726.8,121.6 L730.2,125.2 L733.6,121.6 M735.5,112.5 H740 M735.5,118.2 H742.5 M738,123.8 H744.5"/></g>
<g fill="none" stroke="#333" stroke-width="1.4" stroke-linejoin="round" stroke-linecap="round"><path d="M876.5,112.8 V111.5 Q876.5,109.5 878.5,109.5 H889.6 Q891.6,109.5 891.6,111.5 V112.8 M876.5,122.3 V123.4 Q876.5,125.4 878.5,125.4 H889.6 Q891.6,125.4 891.6,123.4 V122.3 M880.3,113.4 V121.4 M884.2,113.4 V118.3 M887.7,113.4 V119.2"/></g>
<g fill="none" stroke="#333" stroke-width="1.4" stroke-linejoin="round" stroke-linecap="round"><path d="M1018,113.3 H1035 M1021.5,117.2 H1031.5 M1024.5,121.1 H1028.5"/></g>
<g stroke="#aaa" stroke-width="1.5" fill="#fff"><path d="M1114.5,117.7 H1220"/><circle cx="1111" cy="117.7" r="3.6"/><circle cx="1155.8" cy="117.7" r="3.6"/><circle cx="1178.5" cy="117.7" r="3.6"/><circle cx="1201" cy="117.7" r="3.6"/><circle cx="1223.4" cy="117.7" r="3.6"/></g><circle cx="1133.3" cy="117.7" r="7.6" fill="#b3b3b3"/>
<g fill="none" stroke="#333" stroke-width="1.4" stroke-linejoin="round" stroke-linecap="round"><path d="M1333,110.6 H1329.2 Q1327.6,110.6 1327.6,112.2 V123 Q1327.6,124.6 1329.2,124.6 H1340 Q1341.6,124.6 1341.6,123 V119.2 M1334.5,117.6 L1341.5,110.6 M1336.5,110.6 H1341.5 V115.6"/></g>
<path d="M889.1,160 V174.4 M881.9,167.2 H896.3" stroke="#888" stroke-width="1.5" fill="none"/>
<g fill="#a3a3a3"><circle cx="882.6" cy="210.45" r="1.55"/><circle cx="888.9" cy="210.45" r="1.55"/><circle cx="895.1999999999999" cy="210.45" r="1.55"/></g>
<g fill="#a3a3a3"><circle cx="882.6" cy="247.95" r="1.55"/><circle cx="888.9" cy="247.95" r="1.55"/><circle cx="895.1999999999999" cy="247.95" r="1.55"/></g>
<g fill="none" stroke="#444" stroke-width="1.3"><rect x="441.04999999999995" y="242.85" width="11.6" height="11.4" rx="1.6"/><path d="M444.0,248.45 H449.7"/></g>
<g fill="#a3a3a3"><circle cx="882.6" cy="285.45" r="1.55"/><circle cx="888.9" cy="285.45" r="1.55"/><circle cx="895.1999999999999" cy="285.45" r="1.55"/></g>
<circle cx="784" cy="286.34999999999997" r="5.2" fill="#ff9a22"/>
<g fill="#a3a3a3"><circle cx="882.6" cy="322.95" r="1.55"/><circle cx="888.9" cy="322.95" r="1.55"/><circle cx="895.1999999999999" cy="322.95" r="1.55"/></g>
<circle cx="784" cy="323.84999999999997" r="5.2" fill="#ff9a22"/>
<g fill="#a3a3a3"><circle cx="882.6" cy="360.45" r="1.55"/><circle cx="888.9" cy="360.45" r="1.55"/><circle cx="895.1999999999999" cy="360.45" r="1.55"/></g>
<circle cx="784" cy="361.34999999999997" r="5.2" fill="#ff9a22"/>
<g fill="#a3a3a3"><circle cx="882.6" cy="397.95" r="1.55"/><circle cx="888.9" cy="397.95" r="1.55"/><circle cx="895.1999999999999" cy="397.95" r="1.55"/></g>
<circle cx="784" cy="398.84999999999997" r="5.2" fill="#ff9a22"/>
<g fill="#a3a3a3"><circle cx="882.6" cy="435.45" r="1.55"/><circle cx="888.9" cy="435.45" r="1.55"/><circle cx="895.1999999999999" cy="435.45" r="1.55"/></g>
<circle cx="784" cy="436.34999999999997" r="5.2" fill="#ff9a22"/>
<g fill="none" stroke="#2a6bc4" stroke-width="1.3"><circle cx="502.4" cy="476.05" r="7.8"/><path d="M502.4,471.65 V480.45 M498,476.05 H506.8"/></g>
<g fill="#a3a3a3"><circle cx="882.6" cy="510.45" r="1.55"/><circle cx="888.9" cy="510.45" r="1.55"/><circle cx="895.1999999999999" cy="510.45" r="1.55"/></g>
<g fill="none" stroke="#444" stroke-width="1.3"><rect x="441.04999999999995" y="505.34999999999997" width="11.6" height="11.4" rx="1.6"/><path d="M444.0,510.95 H449.7"/></g>
<g fill="#a3a3a3"><circle cx="882.6" cy="547.95" r="1.55"/><circle cx="888.9" cy="547.95" r="1.55"/><circle cx="895.1999999999999" cy="547.95" r="1.55"/></g>
<circle cx="784" cy="548.85" r="5.2" fill="#999"/>
<g fill="#a3a3a3"><circle cx="882.6" cy="585.45" r="1.55"/><circle cx="888.9" cy="585.45" r="1.55"/><circle cx="895.1999999999999" cy="585.45" r="1.55"/></g>
<circle cx="784" cy="586.35" r="5.2" fill="#ff9a22"/>
<g fill="#a3a3a3"><circle cx="882.6" cy="622.95" r="1.55"/><circle cx="888.9" cy="622.95" r="1.55"/><circle cx="895.1999999999999" cy="622.95" r="1.55"/></g>
<circle cx="784" cy="623.85" r="5.2" fill="#999"/>
<g fill="#a3a3a3"><circle cx="882.6" cy="660.45" r="1.55"/><circle cx="888.9" cy="660.45" r="1.55"/><circle cx="895.1999999999999" cy="660.45" r="1.55"/></g>
<circle cx="784" cy="661.35" r="5.2" fill="#999"/>
<g fill="none" stroke="#2a6bc4" stroke-width="1.3"><circle cx="502.4" cy="701.0500000000001" r="7.8"/><path d="M502.4,696.6500000000001 V705.45 M498,701.0500000000001 H506.8"/></g>
<g fill="#a3a3a3"><circle cx="882.6" cy="735.45" r="1.55"/><circle cx="888.9" cy="735.45" r="1.55"/><circle cx="895.1999999999999" cy="735.45" r="1.55"/></g>
<g fill="none" stroke="#444" stroke-width="1.3"><rect x="441.04999999999995" y="730.35" width="11.6" height="11.4" rx="1.6"/><path d="M444.0,735.95 H449.7"/></g>
<g fill="#a3a3a3"><circle cx="882.6" cy="772.95" r="1.55"/><circle cx="888.9" cy="772.95" r="1.55"/><circle cx="895.1999999999999" cy="772.95" r="1.55"/></g>
<circle cx="784" cy="773.85" r="5.2" fill="#ff9a22"/>
<g fill="#a3a3a3"><circle cx="882.6" cy="810.45" r="1.55"/><circle cx="888.9" cy="810.45" r="1.55"/><circle cx="895.1999999999999" cy="810.45" r="1.55"/></g>
<circle cx="784" cy="811.35" r="5.2" fill="#999"/>
<g fill="#aaa"><circle cx="334.5" cy="730" r="1.5"/><circle cx="339.5" cy="730" r="1.5"/><circle cx="334.5" cy="736" r="1.5"/><circle cx="339.5" cy="736" r="1.5"/><circle cx="334.5" cy="742" r="1.5"/><circle cx="339.5" cy="742" r="1.5"/></g>
<g fill="none" stroke="#777" stroke-width="1.3"><path d="M594,731 V728 H597 M609,728 H612 V731 M612,741 V744 H609 M597,744 H594 V741"/><rect x="598.5" y="732.5" width="9" height="7.5"/><path d="M623.5,728.3 H642 M629.5,728.3 V726.3 H636 V728.3 M625.5,729.5 V745.5 H640 V729.5"/></g>
<defs><clipPath id="cc"><rect x="920.5" y="192" width="471.5" height="631"/></clipPath></defs>
<g clip-path="url(#cc)">
<rect x="900" y="207" width="492" height="7" fill="#9e9e9e"/><rect x="900" y="207" width="152" height="7" fill="#646464"/>
<rect x="900" y="257" width="492" height="6" fill="#f8d095"/><rect x="900" y="257" width="241.7" height="6" rx="2" fill="#e2b26c"/>
<text x="1023.5" y="250" text-anchor="end" font-family="Liberation Sans" font-weight="bold" font-size="15.6" letter-spacing="-0.369" fill="#b58139">Market Research and Analysis</text>
<rect x="1030" y="240.5" width="1.2" height="7" fill="#c9a575"/>
<text x="1039.5" y="250" font-family="Liberation Sans" font-size="15.5" letter-spacing="-0.316" fill="#bf9152">14.11.2025 - 04.12.2025</text>
<rect x="931" y="519" width="461" height="5.5" rx="1" fill="#80c480"/><rect x="931" y="519" width="87.7" height="5.5" rx="1" fill="#4f8a4b"/>
<text x="938.6" y="512" font-family="Liberation Sans" font-weight="bold" font-size="15.6" letter-spacing="-0.369" fill="#1e4620">Product Development</text>
<rect x="1099" y="502.5" width="1.2" height="7" fill="#8a9a8a"/>
<text x="1108" y="512" font-family="Liberation Sans" font-size="15.5" letter-spacing="-0.316" fill="#2f3f2f">18.11.2025 - 08.12.2025</text>
<rect x="1353" y="744" width="60" height="6" rx="1" fill="#4f8a4b"/>
<text x="1360.8" y="737.6" font-family="Liberation Sans" font-weight="bold" font-size="15.6" letter-spacing="-0.369" fill="#1e4620">Features</text>
<rect x="819" y="271" width="145" height="29" rx="4" fill="#fff"/>
<rect x="820" y="272" width="143" height="27" rx="3" fill="#4fc5d6"/>
<path d="M823,272 H860 V299 H823 Q820,299 820,296 V275 Q820,272 823,272 Z" fill="#45899a"/>
<text x="960.2" y="289.60" text-anchor="end" font-family="Liberation Sans" font-size="15" fill="#fff">Target market definition</text>
<rect x="962.2" y="308" width="99.5" height="30" rx="4" fill="#fff"/>
<rect x="963.2" y="309" width="97.5" height="28" rx="3" fill="#4fc5d6"/>
<path d="M966.2,309 H1011.6 V337 H966.2 Q963.2,337 963.2,334 V312 Q963.2,309 966.2,309 Z" fill="#45899a"/>
<text x="965.2" y="327.10" text-anchor="start" font-family="Liberation Sans" font-size="15" fill="#fff">Market nee…</text>
<rect x="1124.8" y="346" width="99.0" height="29" rx="4" fill="#fff"/>
<rect x="1125.8" y="347" width="97.0" height="27" rx="3" fill="#4fc5d6"/>
<path d="M1128.8,347 H1173.8 V374 H1128.8 Q1125.8,374 1125.8,371 V350 Q1125.8,347 1128.8,347 Z" fill="#45899a"/>
<text x="1127.4" y="364.60" text-anchor="start" font-family="Liberation Sans" font-size="15" fill="#fff">Competitors…</text>
<rect x="1222.2" y="383" width="164.39999999999986" height="30" rx="4" fill="#fff"/>
<rect x="1223.2" y="384" width="162.39999999999986" height="28" rx="3" fill="#4fc5d6"/>
<path d="M1226.2,384 H1303.8 V412 H1226.2 Q1223.2,412 1223.2,409 V387 Q1223.2,384 1226.2,384 Z" fill="#45899a"/>
<text x="1304.6" y="402.10" text-anchor="middle" font-family="Liberation Sans" font-size="15" fill="#fff">Product fit analysis</text>
<rect x="1385" y="421" width="66" height="29" rx="4" fill="#fff"/>
<rect x="1386" y="422" width="64" height="27" rx="3" fill="#4fc5d6"/>
<path d="M1389,422 H1450 V449 H1389 Q1386,449 1386,446 V425 Q1386,422 1389,422 Z" fill="#45899a"/>
<rect x="929.8" y="533" width="228.9000000000001" height="30" rx="4" fill="#fff"/>
<rect x="930.8" y="534" width="226.9000000000001" height="28" rx="3" fill="#4fc5d6"/>
<text x="1045" y="552.10" text-anchor="middle" font-family="Liberation Sans" font-size="15" fill="#fff">Product specifications</text>
<rect x="1157.2" y="571" width="229.5999999999999" height="29" rx="4" fill="#fff"/>
<rect x="1158.2" y="572" width="227.5999999999999" height="27" rx="3" fill="#4fc5d6"/>
<path d="M1161.2,572 H1271.8 V599 H1161.2 Q1158.2,599 1158.2,596 V575 Q1158.2,572 1161.2,572 Z" fill="#45899a"/>
<text x="1272.5" y="589.60" text-anchor="middle" font-family="Liberation Sans" font-size="15" fill="#fff">Prototype development</text>
<rect x="1385" y="608" width="66" height="30" rx="4" fill="#fff"/>
<rect x="1386" y="609" width="64" height="28" rx="3" fill="#4fc5d6"/>
<rect x="1385" y="646" width="66" height="29" rx="4" fill="#fff"/>
<rect x="1386" y="647" width="64" height="27" rx="3" fill="#4fc5d6"/>
<rect x="1352" y="758" width="99" height="30" rx="4" fill="#fff"/>
<rect x="1353" y="759" width="97" height="28" rx="3" fill="#4fc5d6"/>
<path d="M1356,759 H1450 V787 H1356 Q1353,787 1353,784 V762 Q1353,759 1356,759 Z" fill="#45899a"/>
<rect x="1352" y="796" width="99" height="35" rx="4" fill="#fff"/>
<rect x="1353" y="797" width="97" height="33" rx="3" fill="#4fc5d6"/>
<text x="1381.5" y="817.60" text-anchor="start" font-family="Liberation Sans" font-size="15" fill="#fff">All capabilities</text>
<path d="M962.8,284.1 H978.0 V302.8 H948.0 V321.6 H958.2" fill="none" stroke="#fbc26f" stroke-width="2"/>
<path d="M955.70,316.80 L960.90,321.60 L955.70,326.40 Z" fill="#fbc26f"/>
<path d="M1060.6,321.3 H1075.4 V358.8 H1118.5" fill="none" stroke="#fbc26f" stroke-width="2"/>
<path d="M1118.10,354.00 L1123.30,358.80 L1118.10,363.60 Z" fill="#fbc26f"/>
<path d="M1222.7,359.1 H1237.9 V377.90000000000003 H1208.0 V396.8 H1218.2" fill="none" stroke="#fbc26f" stroke-width="2"/>
<path d="M1215.70,392.00 L1220.90,396.80 L1215.70,401.60 Z" fill="#fbc26f"/>
<path d="M1385.6,396.8 H1400 M1400,415.8 H1370.8 V434.2 H1381" fill="none" stroke="#fbc26f" stroke-width="2"/>
<path d="M1378.50,429.40 L1383.70,434.20 L1378.50,439.00 Z" fill="#fbc26f"/>
<path d="M1157.6,546.6 H1172.8 V565.6999999999999 H1143.0 V584.2 H1153.2" fill="none" stroke="#fbc26f" stroke-width="2"/>
<path d="M1150.70,579.40 L1155.90,584.20 L1150.70,589.00 Z" fill="#fbc26f"/>
<path d="M1385.9,584.2 H1400 M1400,602.9 H1370.8 V659 M1370.8,621.5 H1381 M1370.8,659 H1381" fill="none" stroke="#fbc26f" stroke-width="2"/>
<path d="M1378.50,616.70 L1383.70,621.50 L1378.50,626.30 Z" fill="#fbc26f"/>
<path d="M1378.50,654.20 L1383.70,659.00 L1378.50,663.80 Z" fill="#fbc26f"/>
</g>
<g fill="none" stroke="#fff" stroke-width="1.9" stroke-linecap="round" stroke-linejoin="round"><path d="M926.7,477 V490.5 M930.5,483.5 H942 M934.5,479.5 L930.5,483.5 L934.5,487.5"/></g>
<g fill="none" stroke="#fff" stroke-width="1.8" stroke-linecap="round" stroke-linejoin="round"><path d="M1142.5,815 V802.6 M1138.2,806.8 L1142.5,802.5 L1146.8,806.8 M1135.8,818.2 H1149.4"/></g>
<path d="M335,827.3 V840 L327.7,833.6 Z" fill="#8a8a8a"/>
<path d="M1380,827.3 V840 L1387.3,833.6 Z" fill="#8a8a8a"/>
<g fill="none" stroke="#999" stroke-width="1.4" stroke-linejoin="round" stroke-linecap="round"><path d="M342.5,863 L351,854.5 Q354,851.8 356,854 Q358.2,856.2 355.5,859 L346.5,868 Q344.5,870 342.8,868.2 Q341,866.5 343,864.5 L350.5,857"/></g>
<g fill="none" stroke="#999" stroke-width="1.4" stroke-linejoin="round" stroke-linecap="round"><circle cx="487.6" cy="862.7" r="8"/><path d="M484.5,852 H490.7 M487.6,859 V863 M494.5,855.5 L496,854"/></g>
<g fill="none" stroke="#999" stroke-width="1.3" stroke-linejoin="round"><path d="M1112.5,853 L1126.5,861.5 L1112.5,870 Z M1112.5,853 L1121.5,866.5 M1112.5,870 L1121.5,856.5"/></g>
<g fill="none" stroke="#999" stroke-width="1.3"><path d="M1144.5,856.3 Q1141,855 1138.5,857 Q1136,859.5 1137,864 Q1138.5,869.5 1141,870.2 Q1142.5,870.5 1144.5,869.6 Q1146.5,870.5 1148,870.2 Q1150.5,869.5 1152.3,865 Q1149.5,863.5 1149.5,860.5 Q1149.5,858.2 1151.3,857.2 Q1149,854.8 1144.5,856.3 Z M1144.5,855.8 Q1144.5,852 1148,851.2"/></g>
<circle cx="1194.6" cy="861.6" r="8.7" fill="#a6a6a6"/>
<text x="1194.6" y="866.4" text-anchor="middle" font-family="Liberation Sans" font-weight="bold" font-size="13.5" fill="#fff">?</text>
</svg>
</body></html>
